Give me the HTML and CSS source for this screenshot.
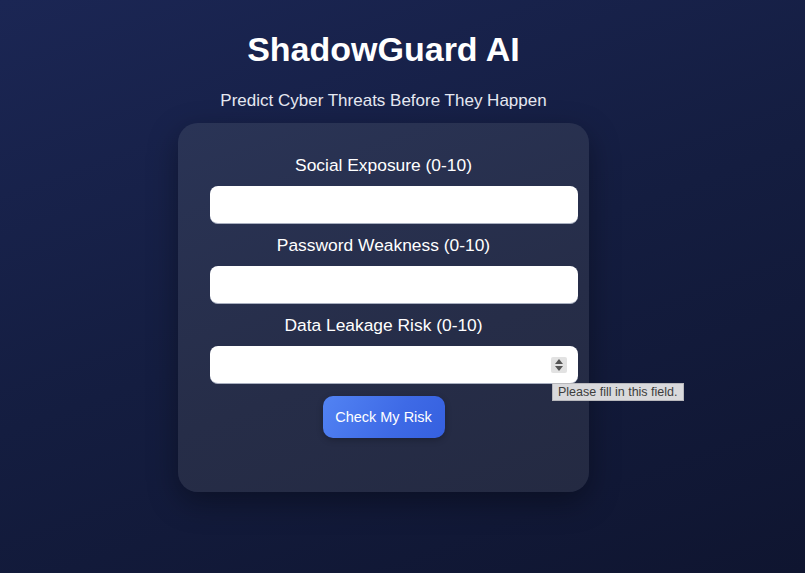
FILE: index.html
```html
<!DOCTYPE html>
<html>
<head>
<meta charset="utf-8">
<link rel="stylesheet" href="styles.css">
</head>
<body>
<main class="page">
  <h1 class="title">ShadowGuard AI</h1>
  <p class="subtitle">Predict Cyber Threats Before They Happen</p>
  <form class="card">
    <label class="label">Social Exposure (0-10)</label>
    <div class="field"><input class="input" type="text"></div>
    <label class="label">Password Weakness (0-10)</label>
    <div class="field"><input class="input" type="text"></div>
    <label class="label">Data Leakage Risk (0-10)</label>
    <div class="field">
      <input class="input" type="text">
      <span class="spinner"><span class="up"></span><span class="down"></span></span>
      <span class="tooltip">Please fill in this field.</span>
    </div>
    <button class="btn" type="button">Check My Risk</button>
  </form>
</main>
</body>
</html>
```
FILE: styles.css
```css
html, body {
  margin: 0;
  height: 100%;
}
body {
  background: linear-gradient(160deg, #1b2654 0%, #141d40 50%, #0f1530 100%);
  font-family: "Liberation Sans", Arial, sans-serif;
  color: #ffffff;
  overflow: hidden;
}
.page {
  width: 767px;
  display: flex;
  flex-direction: column;
  align-items: center;
  padding-top: 30px;
}
.title {
  margin: 0;
  font-size: 34px;
  font-weight: bold;
  line-height: 38px;
}
.subtitle {
  margin: 23px 0 0;
  font-size: 17px;
  line-height: 20px;
  color: #e6e9f2;
}
.card {
  margin-top: 12px;
  width: 347px;
  padding: 32px 32px 54px;
  border-radius: 20px;
  background: linear-gradient(160deg, #2a3456 0%, #262d48 60%, #242a42 100%);
  box-shadow: 0 10px 30px rgba(0, 0, 0, 0.35);
  display: flex;
  flex-direction: column;
  align-items: center;
}
.label {
  display: block;
  font-size: 17.4px;
  line-height: 20px;
  color: #ffffff;
  margin: 0 0 11px;
}
.field {
  position: relative;
  align-self: flex-start;
  margin-bottom: 11px;
}
.input {
  display: block;
  box-sizing: border-box;
  width: 368px;
  height: 38px;
  border: none;
  border-bottom: 1px solid #a8afc0;
  border-radius: 8px;
  background: #ffffff;
  padding: 0 10px;
  font-size: 16px;
  outline: none;
}
.spinner {
  position: absolute;
  right: 11px;
  top: 11px;
  width: 16px;
  height: 16px;
  background: #e2e2e2;
  border-radius: 2px;
  display: flex;
  flex-direction: column;
  align-items: center;
  justify-content: space-around;
  padding: 1px 0;
  box-sizing: border-box;
}
.up {
  width: 0;
  height: 0;
  border-left: 4px solid transparent;
  border-right: 4px solid transparent;
  border-bottom: 5px solid #555;
}
.down {
  width: 0;
  height: 0;
  border-left: 4px solid transparent;
  border-right: 4px solid transparent;
  border-top: 5px solid #555;
}
.tooltip {
  position: absolute;
  left: 342px;
  top: 37px;
  white-space: nowrap;
  background: #d9d9dc;
  border: 1px solid #b8b8bc;
  color: #3d3d3d;
  font-size: 12.5px;
  line-height: 16px;
  padding: 0 5px;
  z-index: 2;
}
.btn {
  margin-top: 1px;
  width: 122px;
  height: 42px;
  border: none;
  border-radius: 10px;
  background: linear-gradient(120deg, #5283f3 0%, #3e6ae6 60%, #3560df 100%);
  color: #ffffff;
  font-family: "Liberation Sans", Arial, sans-serif;
  font-size: 14.5px;
  box-shadow: 0 2px 6px rgba(0, 0, 0, 0.25);
}
```
